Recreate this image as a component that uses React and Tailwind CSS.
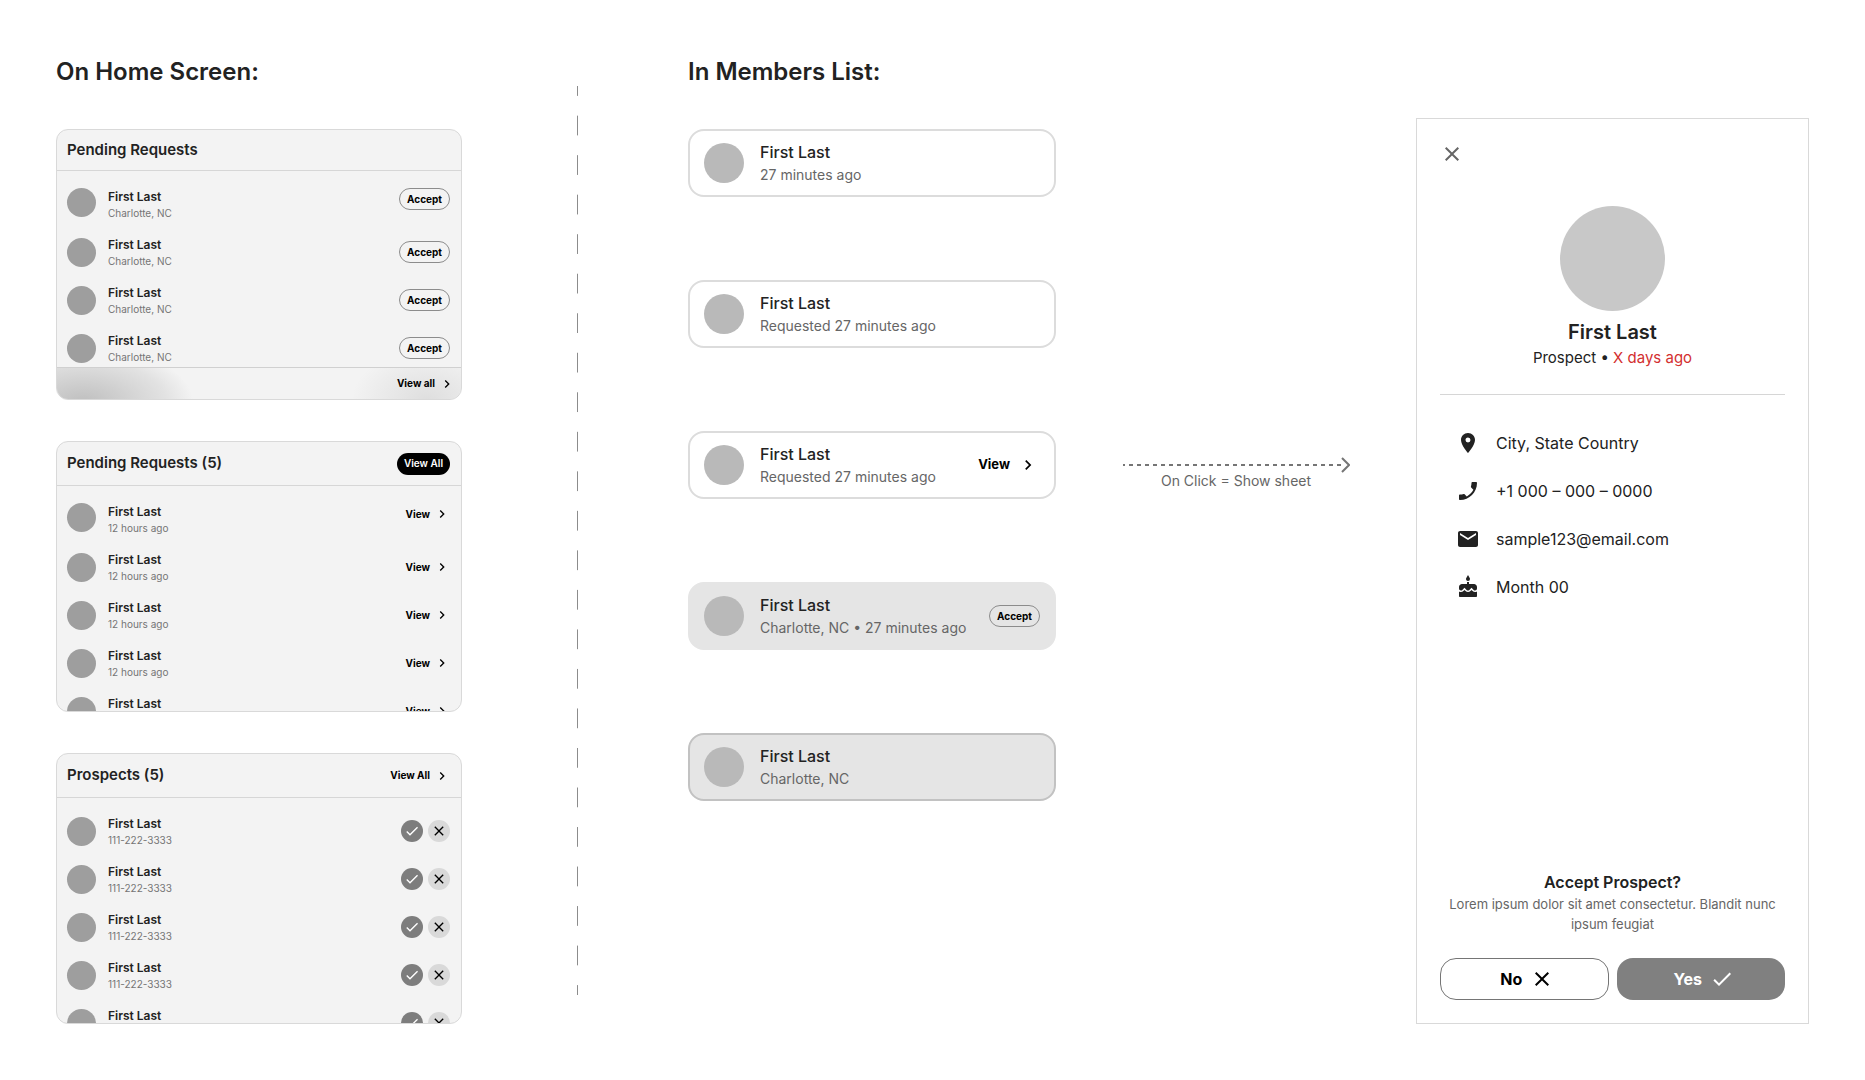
import {
  MdCake,
  MdCheck,
  MdChevronRight,
  MdClose,
  MdEmail,
  MdLocationOn,
  MdPhoneEnabled,
} from "react-icons/md";

function AcceptButton() {
  return (
    <button className="flex h-[22px] w-[51px] shrink-0 items-center justify-center rounded-full border border-[#8c8c8c] text-[10px] font-bold text-black">
      Accept
    </button>
  );
}

function ViewLink({ label = "View" }) {
  return (
    <button className="flex h-[22px] shrink-0 items-center gap-1 text-[10px] font-bold text-black">
      {label}
      <MdChevronRight className="size-4" />
    </button>
  );
}

function DecisionButtons() {
  return (
    <div className="flex shrink-0 gap-[5px]">
      <button aria-label="Accept" className="flex size-[22px] items-center justify-center rounded-full bg-[#7d7d7d] text-white">
        <MdCheck className="size-4" />
      </button>
      <button aria-label="Decline" className="flex size-[22px] items-center justify-center rounded-full bg-[#d9d9d9] text-black">
        <MdClose className="size-4" />
      </button>
    </div>
  );
}

function RequestRow({ detail, action, className = "items-center" }) {
  return (
    <li className={`flex h-8 shrink-0 ${className}`}>
      <span className="size-[29px] shrink-0 rounded-full bg-[#9e9e9e]" />
      <div className="ml-3 min-w-0 flex-1">
        <p className="text-xs leading-[18px] font-semibold text-[#222]">First Last</p>
        <p className="text-[10px] leading-[14px] text-[#757575]">{detail}</p>
      </div>
      {action}
    </li>
  );
}

function HomeCard({ title, headerAction, headerClass, detail, action, count, topFirst, footer }) {
  return (
    <section className="flex h-[271px] flex-col overflow-hidden rounded-xl border border-[#d9d9d9] bg-[#f3f3f3]">
      <header className={`flex shrink-0 items-center justify-between border-b border-[#d6d6d6] pr-[11px] pl-2.5 ${headerClass}`}>
        <h2 className="text-[15px] font-semibold text-[#222]">{title}</h2>
        {headerAction}
      </header>
      <ul className="flex min-h-0 flex-1 flex-col gap-4 overflow-hidden pt-[17px] pr-[11px] pl-2.5">
        {Array.from({ length: count }, (_, i) => (
          <RequestRow
            key={i}
            detail={detail}
            action={action}
            className={topFirst && i === 0 ? "items-start" : "items-center"}
          />
        ))}
      </ul>
      {footer}
    </section>
  );
}

function MemberCard({ detail, action, className }) {
  return (
    <article className={`flex h-[68px] items-center rounded-2xl border-2 px-3.5 ${className}`}>
      <span className="size-10 shrink-0 rounded-full bg-[#b9b9b9]" />
      <div className="ml-4 min-w-0 flex-1 whitespace-nowrap">
        <p className="mb-0.5 text-base leading-[22px] font-medium text-[#222]">First Last</p>
        <p className="text-sm leading-5 text-[#666]">{detail}</p>
      </div>
      {action}
    </article>
  );
}

const contacts = [
  { icon: MdLocationOn, text: "City, State Country" },
  { icon: MdPhoneEnabled, text: "+1 000 – 000 – 0000" },
  { icon: MdEmail, text: "sample123@email.com" },
  { icon: MdCake, text: "Month 00" },
];

function ProspectSheet() {
  return (
    <aside className="mt-[62px] flex flex-col border border-[#d9d9d9] px-[23px] pb-[23px]">
      <button aria-label="Close" className="mt-[23px] flex size-6 items-center justify-center text-[#666]">
        <MdClose className="size-6" />
      </button>
      <div className="mt-10 flex flex-col items-center border-b border-[#d6d6d6] pb-6">
        <span className="size-[105px] rounded-full bg-[#c8c8c8]" />
        <h2 className="mt-[7px] text-xl leading-7 font-semibold text-[#222]">First Last</h2>
        <p className="text-[15px] leading-6 text-[#222]">
          Prospect • <span className="text-[#d32f2f]">X days ago</span>
        </p>
      </div>
      <ul className="mt-9 flex flex-col gap-6 px-4">
        {contacts.map(({ icon: Icon, text }) => (
          <li key={text} className="flex items-center gap-4 text-base leading-6 text-[#222]">
            <Icon className="size-6 shrink-0" />
            {text}
          </li>
        ))}
      </ul>
      <div className="mt-auto text-center">
        <h3 className="text-base font-semibold text-[#222]">Accept Prospect?</h3>
        <p className="px-2 text-[13px] leading-5 text-[#666]">
          Lorem ipsum dolor sit amet consectetur. Blandit nunc ipsum feugiat
        </p>
      </div>
      <div className="mt-6 grid grid-cols-2 gap-2">
        <button className="flex h-[42px] items-center justify-center gap-2 rounded-2xl border border-[#757575] pl-1.5 text-base font-bold text-black">
          No
          <MdClose className="size-6" />
        </button>
        <button className="flex h-[42px] items-center justify-center gap-2 rounded-2xl bg-[#808080] pl-1.5 text-base font-bold text-white">
          Yes
          <MdCheck className="size-6" />
        </button>
      </div>
    </aside>
  );
}

export default function App() {
  return (
    <main className="grid min-h-screen grid-cols-[minmax(0,406fr)_minmax(0,226fr)_minmax(0,368fr)_minmax(0,360fr)_minmax(0,393fr)] bg-white px-14 py-14 font-['Inter',sans-serif]">
      <div>
        <h1 className="text-2xl leading-8 font-semibold text-[#222]">On Home Screen:</h1>
        <div className="mt-[41px] flex flex-col gap-[41px]">
          <HomeCard
            title="Pending Requests"
            headerClass="h-[41px]"
            detail="Charlotte, NC"
            action={<AcceptButton />}
            count={4}
            topFirst
            footer={
              <footer className="flex h-8 shrink-0 items-center justify-end border-t border-[#d0d0d0] bg-[radial-gradient(ellipse_110px_56px_at_26px_34px,#bfbfbf,#d4d4d4_45%,#e2e2e2_75%,#f3f3f300),radial-gradient(ellipse_75px_50px_at_370px_32px,#dedede,#f3f3f300)] px-1.5">
                <ViewLink label="View all" />
              </footer>
            }
          />
          <HomeCard
            title="Pending Requests (5)"
            headerClass="h-11"
            headerAction={
              <button className="h-[22px] w-[53px] rounded-full bg-black text-[10px] font-semibold text-white">
                View All
              </button>
            }
            detail="12 hours ago"
            action={<ViewLink />}
            count={5}
            topFirst
          />
          <HomeCard
            title="Prospects (5)"
            headerClass="h-11"
            headerAction={<ViewLink label="View All" />}
            detail="111-222-3333"
            action={<DecisionButtons />}
            count={5}
          />
        </div>
      </div>

      <div className="flex justify-center pt-[30px] pb-[29px] pl-1">
        <svg className="h-full w-px text-[#8c8c8c]" aria-hidden="true">
          <line x1="0.5" y1="0" x2="0.5" y2="100%" pathLength="92" stroke="currentColor" strokeDasharray="2 2" strokeDashoffset="1" />
        </svg>
      </div>

      <div>
        <h1 className="text-2xl leading-8 font-semibold text-[#222]">In Members List:</h1>
        <div className="mt-[41px] flex flex-col gap-[83px]">
          <MemberCard detail="27 minutes ago" className="border-[#dcdcdc]" />
          <MemberCard detail="Requested 27 minutes ago" className="border-[#dcdcdc]" />
          <MemberCard
            detail="Requested 27 minutes ago"
            className="border-[#dcdcdc]"
            action={
              <button className="flex items-center gap-2 pr-0.5 text-[13px] font-bold text-black">
                View
                <MdChevronRight className="size-5" />
              </button>
            }
          />
          <MemberCard
            detail="Charlotte, NC • 27 minutes ago"
            className="border-[#e5e5e5] bg-[#e5e5e5]"
            action={<AcceptButton />}
          />
          <MemberCard detail="Charlotte, NC" className="border-[#c2c2c2] bg-[#e5e5e5]" />
        </div>
      </div>

      <div className="flex flex-col items-center pt-[401px] text-[#757575]">
        <svg width="228" height="16" viewBox="0 0 228 16" fill="none" stroke="currentColor" strokeWidth="2" aria-hidden="true">
          <path d="M1 8H222" strokeDasharray="4 4" strokeDashoffset="2" />
          <path d="M220 1L227 8L220 15" />
        </svg>
        <p className="text-sm leading-4 text-[#666]">On Click = Show sheet</p>
      </div>

      <ProspectSheet />
    </main>
  );
}
